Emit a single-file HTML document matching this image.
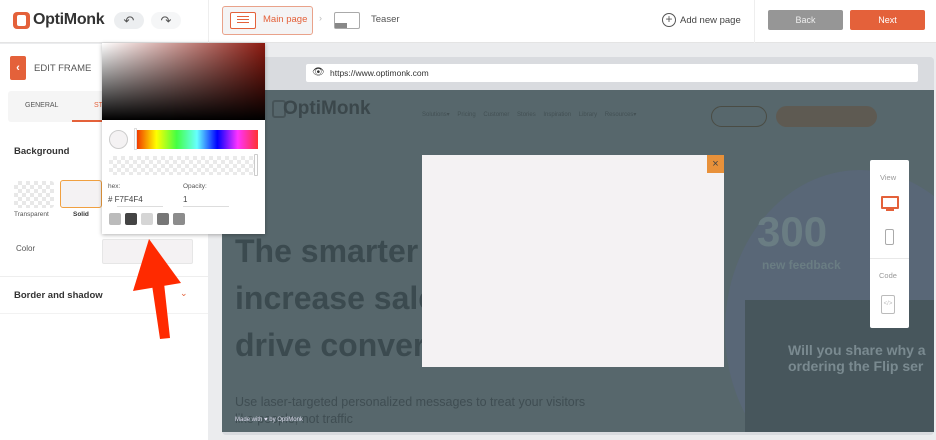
<!DOCTYPE html>
<html><head><style>
*{box-sizing:border-box;margin:0;padding:0}
body{width:936px;height:440px;overflow:hidden;background:#ebecee;font-family:"Liberation Sans",sans-serif;position:relative;color:#333}
.a{position:absolute}
</style></head><body>
<!-- top bar -->
<div class="a" style="left:0;top:0;width:936px;height:43px;background:#fff;border-bottom:1px solid #e4e4e4"></div>
<div class="a" style="left:208px;top:0;width:1px;height:43px;background:#eee"></div>
<div class="a" style="left:754px;top:0;width:1px;height:43px;background:#eee"></div>
<div class="a" style="left:13px;top:12px;width:17px;height:17px;border-radius:4px;background:#e4613a"></div>
<div class="a" style="left:17px;top:15px;width:9px;height:11px;border-radius:2px;background:#fff"></div>
<div class="a" style="left:33px;top:11px;font-size:16px;font-weight:bold;color:#333;letter-spacing:-0.3px">OptiMonk</div>
<div class="a" style="left:114px;top:12px;width:30px;height:17px;border-radius:9px;background:#eceef0;text-align:center;font-size:13px;line-height:17px;color:#555">↶</div>
<div class="a" style="left:151px;top:12px;width:30px;height:17px;border-radius:9px;background:#f5f6f7;text-align:center;font-size:13px;line-height:17px;color:#555">↷</div>
<div class="a" style="left:222px;top:6px;width:91px;height:29px;border:1px solid #e9a28a;border-radius:3px;background:#f4f4f5"></div>
<div class="a" style="left:230px;top:12px;width:26px;height:17px;border:1px solid #e4613a;border-radius:2px;background:#fff"></div>
<div class="a" style="left:237px;top:16px;width:12px;height:1px;background:#e4613a;box-shadow:0 3px 0 #e4613a,0 6px 0 #e4613a"></div>
<div class="a" style="left:263px;top:14px;font-size:9.5px;color:#e4613a">Main page</div>
<div class="a" style="left:319px;top:13px;font-size:9px;color:#bbb">›</div>
<div class="a" style="left:334px;top:12px;width:26px;height:17px;border:1px solid #aaa;border-radius:2px;background:#fff"></div>
<div class="a" style="left:335px;top:23px;width:12px;height:5px;background:#888"></div>
<div class="a" style="left:371px;top:14px;font-size:9.5px;color:#555">Teaser</div>
<div class="a" style="left:662px;top:13px;width:14px;height:14px;border:1.3px solid #555;border-radius:50%;text-align:center;font-size:12px;line-height:11px;color:#555">+</div>
<div class="a" style="left:680px;top:15px;font-size:9.5px;color:#444">Add new page</div>
<div class="a" style="left:768px;top:10px;width:75px;height:20px;background:#969696;border-radius:2px;color:#eee;font-size:9px;text-align:center;line-height:20px">Back</div>
<div class="a" style="left:850px;top:10px;width:75px;height:20px;background:#e4613a;border-radius:2px;color:#fff;font-size:9px;text-align:center;line-height:20px">Next</div>
<!-- left panel -->
<div class="a" style="left:0;top:44px;width:208px;height:396px;background:#fff"></div>
<div class="a" style="left:10px;top:56px;width:16px;height:24px;background:#e4613a;border-radius:2px;color:#fff;font-size:11px;text-align:center;line-height:24px;font-weight:bold">‹</div>
<div class="a" style="left:34px;top:63px;font-size:9.5px;color:#555">EDIT FRAME</div>
<div class="a" style="left:8px;top:91px;width:195px;height:31px;background:#f5f5f5;border-radius:3px"></div>
<div class="a" style="left:25px;top:102px;font-size:7px;color:#555">GENERAL</div>
<div class="a" style="left:94px;top:102px;font-size:7px;color:#e4613a">ST</div>
<div class="a" style="left:72px;top:120px;width:40px;height:2px;background:#e4613a"></div>
<div class="a" style="left:14px;top:146px;font-size:9.5px;font-weight:bold;color:#333">Background</div>
<div class="a" style="left:14px;top:181px;width:40px;height:27px;border-radius:3px;background:repeating-conic-gradient(#e8e8e8 0 25%,#fff 0 50%) 0 0/8px 8px"></div>
<div class="a" style="left:60px;top:180px;width:42px;height:28px;border:1.5px solid #f0a040;border-radius:3px;background:#f4f2f3"></div>
<div class="a" style="left:14px;top:211px;font-size:6.5px;color:#555">Transparent</div>
<div class="a" style="left:73px;top:211px;font-size:6.5px;color:#333;font-weight:bold">Solid</div>
<div class="a" style="left:16px;top:244px;font-size:8px;color:#555">Color</div>
<div class="a" style="left:102px;top:239px;width:91px;height:25px;border:1px solid #e6e6e6;background:#f4f2f3;border-radius:2px"></div>
<div class="a" style="left:0;top:276px;width:208px;height:1px;background:#eee"></div>
<div class="a" style="left:14px;top:290px;font-size:9.5px;font-weight:bold;color:#333">Border and shadow</div>
<div class="a" style="left:180px;top:288px;font-size:9px;color:#e4613a">⌄</div>
<div class="a" style="left:0;top:313px;width:208px;height:1px;background:#f2f2f2"></div>
<!-- browser -->
<div class="a" style="left:222px;top:57px;width:712px;height:378px;background:#d9dbdf;border-radius:4px"></div>
<div class="a" style="left:306px;top:64px;width:612px;height:18px;background:#fff;border-radius:2px"></div>
<div class="a" style="left:312px;top:67px;font-size:10px;color:#333">👁</div>
<div class="a" style="left:330px;top:68px;font-size:8.5px;color:#333">https://www.optimonk.com</div>
<div class="a" style="left:222px;top:90px;width:712px;height:342px;background:#57676c;overflow:hidden">
  <div class="a" style="left:503px;top:80px;width:270px;height:320px;border-radius:50%;background:#596777"></div>
  <div class="a" style="left:523px;top:210px;width:200px;height:140px;background:#47565c"></div>
  <div class="a" style="left:50px;top:10px;width:14px;height:18px;border:2px solid #465357;border-radius:3px"></div>
  <div class="a" style="left:61px;top:8px;font-size:19px;font-weight:bold;color:#3b474b">OptiMonk</div>
  <div class="a" style="left:200px;top:21px;font-size:6px;color:#435054;word-spacing:6px;white-space:nowrap">Solutions▾ Pricing Customer&nbsp;Stories Inspiration&nbsp;Library Resources▾</div>
  <div class="a" style="left:489px;top:16px;width:56px;height:21px;border:1.5px solid #4a4c44;border-radius:11px"></div>
  <div class="a" style="left:554px;top:16px;width:101px;height:21px;border-radius:11px;background:#5e5a52"></div>
  <div class="a" style="left:13px;top:138px;font-size:32px;font-weight:bold;color:#3b4a4f;line-height:47px;white-space:nowrap">The smarter<br>increase sales<br>drive conversions</div>
  <div class="a" style="left:535px;top:118px;font-size:42px;font-weight:bold;color:#6a7d83">300</div>
  <div class="a" style="left:540px;top:168px;font-size:12px;font-weight:bold;color:#6a7d83">new feedback</div>
  <div class="a" style="left:566px;top:252px;font-size:14px;font-weight:bold;color:#7a8a90;line-height:16px;white-space:nowrap">Will you share why a<br>ordering the Flip ser</div>
  <div class="a" style="left:13px;top:304px;font-size:12.5px;color:#3f4d52;line-height:17px;white-space:nowrap">Use laser-targeted personalized messages to treat your visitors<br>like people, not traffic</div>
  <div class="a" style="left:13px;top:327px;font-size:6px;color:#dde">Made with ♥ by OptiMonk</div>
</div>
<div class="a" style="left:422px;top:155px;width:302px;height:212px;background:#f4f2f3"></div>
<div class="a" style="left:707px;top:155px;width:17px;height:18px;background:#e8913a;color:#444;font-size:11px;text-align:center;line-height:18px">×</div>
<!-- side panel -->
<div class="a" style="left:870px;top:160px;width:39px;height:168px;background:#fff;border-radius:2px"></div>
<div class="a" style="left:880px;top:173px;font-size:7.5px;color:#999">View</div>
<div class="a" style="left:881px;top:196px;width:18px;height:13px;border:2px solid #e4613a;border-radius:1px"></div>
<div class="a" style="left:886px;top:209px;width:8px;height:2px;background:#e4613a"></div>
<div class="a" style="left:885px;top:229px;width:9px;height:16px;border:1.3px solid #aaa;border-radius:2px"></div>
<div class="a" style="left:870px;top:258px;width:39px;height:1px;background:#e8e8e8"></div>
<div class="a" style="left:879px;top:271px;font-size:7.5px;color:#999">Code</div>
<div class="a" style="left:881px;top:295px;width:14px;height:19px;border:1.3px solid #bbb;border-radius:2px;font-size:6px;color:#bbb;text-align:center;line-height:17px">&lt;/&gt;</div>
<!-- color picker -->
<div class="a" style="left:102px;top:43px;width:163px;height:191px;background:#fff;box-shadow:0 1px 4px rgba(0,0,0,.3)"></div>
<div class="a" style="left:102px;top:43px;width:163px;height:77px;background:linear-gradient(to top,#000,transparent),linear-gradient(to right,#fff,#8b1a10)"></div>
<div class="a" style="left:109px;top:130px;width:19px;height:19px;border-radius:50%;border:1px solid #ccc;background:#f4f2f3"></div>
<div class="a" style="left:136px;top:130px;width:122px;height:19px;background:linear-gradient(to right,#f03000,#ff0,#4f4,#6ff,#00f,#f3f,#f33)"></div>
<div class="a" style="left:134px;top:128px;width:3px;height:22px;background:#fff;border:1px solid #ddd"></div>
<div class="a" style="left:109px;top:156px;width:149px;height:19px;background:repeating-conic-gradient(#eaeaea 0 25%,#fff 0 50%) 0 0/8px 8px"></div>
<div class="a" style="left:254px;top:154px;width:4px;height:22px;background:#fff;border:1px solid #ccc;border-radius:1px"></div>
<div class="a" style="left:108px;top:183px;font-size:6.5px;color:#555">hex:</div>
<div class="a" style="left:183px;top:183px;font-size:6.5px;color:#555">Opacity:</div>
<div class="a" style="left:108px;top:195px;font-size:8px;color:#444">#&nbsp;F7F4F4</div>
<div class="a" style="left:117px;top:206px;width:46px;height:1px;background:#ddd"></div>
<div class="a" style="left:183px;top:195px;font-size:8px;color:#444">1</div>
<div class="a" style="left:183px;top:206px;width:46px;height:1px;background:#ddd"></div>
<div class="a" style="left:109px;top:213px;width:12px;height:12px;background:#bbb;border-radius:2px"></div>
<div class="a" style="left:125px;top:213px;width:12px;height:12px;background:#444;border-radius:2px"></div>
<div class="a" style="left:141px;top:213px;width:12px;height:12px;background:#d5d5d5;border-radius:2px"></div>
<div class="a" style="left:157px;top:213px;width:12px;height:12px;background:#777;border-radius:2px"></div>
<div class="a" style="left:173px;top:213px;width:12px;height:12px;background:#8c8c8c;border-radius:2px"></div>
<!-- red arrow -->
<svg class="a" style="left:130px;top:235px" width="60" height="105"><polygon points="19,4 3,56 51,48" fill="#ff2a00"/><polygon points="22,50 34,48 40,103 30,104" fill="#ff2a00"/></svg>
</body></html>
